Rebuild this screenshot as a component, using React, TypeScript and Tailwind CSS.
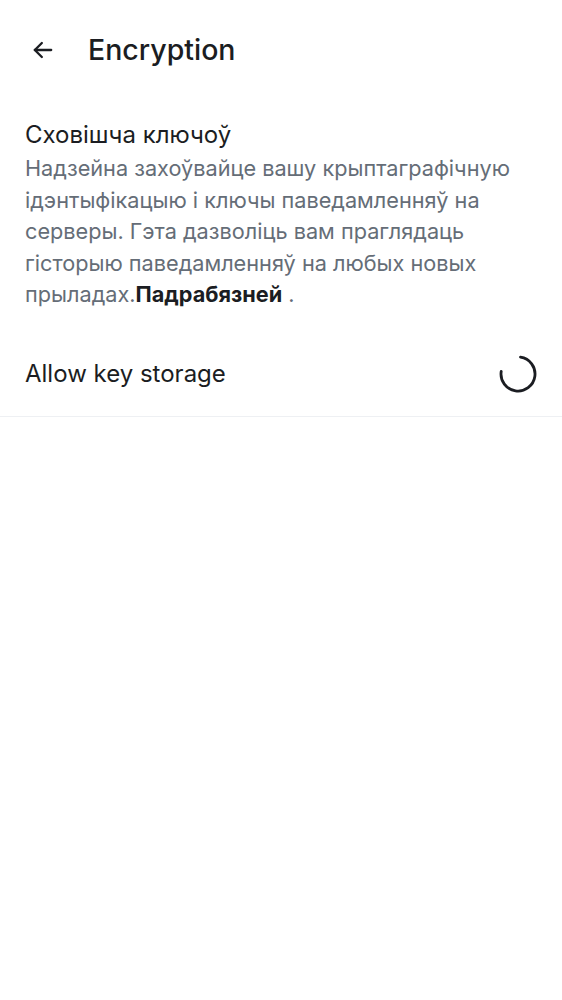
export default function App() {
  return (
    <div className="min-h-screen bg-white" style={{ fontFamily: "Inter, sans-serif" }}>
      {/* Top app bar */}
      <div className="flex h-[100px] items-center px-[28px]">
        <button className="flex h-[30px] w-[30px] items-center justify-center text-[#1b1d22]">
          <svg width="28" height="28" viewBox="0 0 24 24" fill="none" stroke="currentColor" strokeWidth="2" strokeLinecap="round" strokeLinejoin="round">
            <path d="M19 12H5" />
            <path d="M11 6l-6 6 6 6" />
          </svg>
        </button>
        <h1 className="ml-[30px] text-[28.5px] font-medium text-[#1b1d22]">Encryption</h1>
      </div>

      {/* Key storage section */}
      <div className="px-[25px] pt-[19px]">
        <h2 className="text-[24px] leading-[32px] text-[#1b1d22]">Сховішча ключоў</h2>
        <p className="mt-[2px] text-[21.7px] leading-[31.5px] text-[#656d77]">
          Надзейна захоўвайце вашу крыптаграфічную ідэнтыфікацыю і ключы паведамленняў на серверы. Гэта дазволіць вам праглядаць гісторыю паведамленняў на любых новых прыладах.
          <span className="font-bold text-[#1b1d22]">Падрабязней</span> .
        </p>
      </div>

      <div className="mt-[21px] flex h-[85px] items-center justify-between border-b border-[#eef0f3] pl-[25px] pr-[24px]">
        <span className="text-[24px] text-[#1b1d22]">Allow key storage</span>
        <svg width="40" height="40" viewBox="0 0 40 40" fill="none">
          <path d="M22.5 3.2 A17 17 0 1 1 3.2 17.5" stroke="#1b1d22" strokeWidth="2.8" strokeLinecap="round" />
        </svg>
      </div>
    </div>
  );
}
